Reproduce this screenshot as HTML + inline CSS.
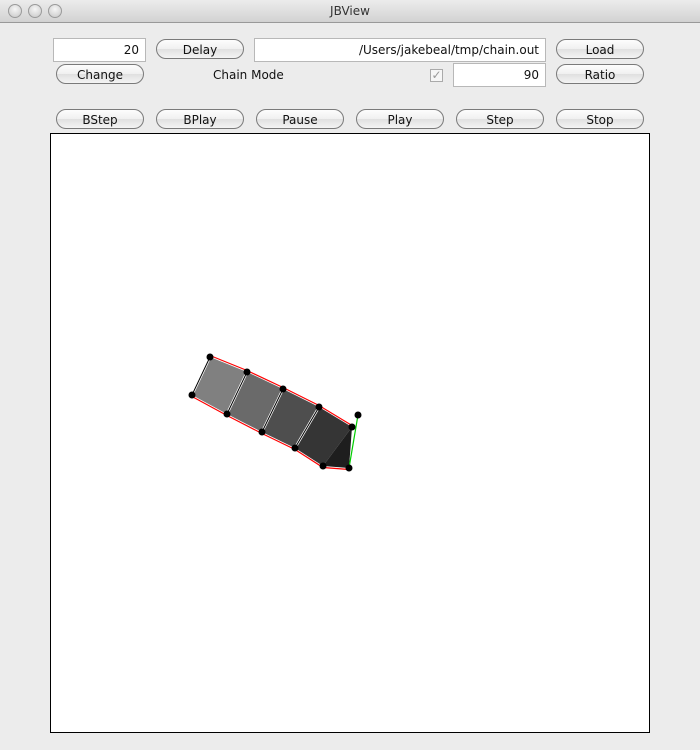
<!DOCTYPE html>
<html><head><style>
body{margin:0;width:700px;height:750px;background:#ececec;font-family:"DejaVu Sans","Liberation Sans",sans-serif;font-size:12px;position:relative;overflow:hidden}
.tb{position:absolute;left:0;top:0;width:700px;height:22px;background:linear-gradient(#ececec,#d2d2d2);border-bottom:1px solid #999;text-align:center;line-height:22px;color:#333;font-size:12px}
.dot{position:absolute;top:4px;width:12px;height:12px;border-radius:50%;background:radial-gradient(circle at 50% 35%,#f6f6f6,#c6c6c6);border:1px solid #9a9a9a}
.b{position:absolute;width:86px;height:18px;border:1px solid #7a7a7a;border-radius:10px;background:linear-gradient(#fdfdfd,#f0f0f0 50%,#e0e0e0 51%,#f4f4f4);text-align:center;line-height:20px;color:#111;box-sizing:content-box}
.f{position:absolute;background:#fff;border:1px solid #b8b8b8;height:22px;line-height:22px;text-align:right;padding-right:6px;box-sizing:border-box;color:#111}
</style></head><body>
<div class="tb">JBView</div>
<div class="dot" style="left:8px"></div><div class="dot" style="left:28px"></div><div class="dot" style="left:48px"></div>
<div class="f" style="left:53px;top:38px;width:93px;height:24px">20</div>
<div class="b" style="left:156px;top:39px">Delay</div>
<div class="f" style="left:254px;top:38px;width:292px;height:24px">/Users/jakebeal/tmp/chain.out</div>
<div class="b" style="left:556px;top:39px">Load</div>
<div class="b" style="left:56px;top:64px">Change</div>
<div style="position:absolute;left:213px;top:68px;color:#111">Chain Mode</div>
<div style="position:absolute;left:430px;top:69px;width:11px;height:11px;border:1px solid #aaa;background:#f6f6f6;color:#999;font-size:12px;line-height:11px;text-align:center">✓</div>
<div class="f" style="left:453px;top:63px;width:93px;height:24px">90</div>
<div class="b" style="left:556px;top:64px">Ratio</div>
<div class="b" style="left:56px;top:109px">BStep</div>
<div class="b" style="left:156px;top:109px">BPlay</div>
<div class="b" style="left:256px;top:109px">Pause</div>
<div class="b" style="left:356px;top:109px">Play</div>
<div class="b" style="left:456px;top:109px">Step</div>
<div class="b" style="left:556px;top:109px">Stop</div>
<svg style="position:absolute;left:0;top:0" width="700" height="750">
<rect x="50.5" y="133.5" width="599" height="599" fill="#fff" stroke="#000"/>
<polygon points="210,357 247,372 227,414 192,395" fill="#808080"/>
<polygon points="247,372 283,389 262,432 227,414" fill="#6a6a6a"/>
<polygon points="283,389 319,407 295,448 262,432" fill="#4e4e4e"/>
<polygon points="319,407 352,427 323,466 295,448" fill="#353535"/>
<polygon points="352,427 349,468 323,466" fill="#1e1e1e"/>
<g stroke="#fff" stroke-width="2.5"><line x1="210" y1="357" x2="192" y2="395"/><line x1="247" y1="372" x2="227" y2="414"/><line x1="283" y1="389" x2="262" y2="432"/><line x1="319" y1="407" x2="295" y2="448"/></g>
<g stroke="#000" stroke-width="1"><line x1="210" y1="357" x2="192" y2="395"/><line x1="247" y1="372" x2="227" y2="414"/><line x1="283" y1="389" x2="262" y2="432"/><line x1="319" y1="407" x2="295" y2="448"/></g>
<polyline points="210,357 247,372 283,389 319,407 352,427" fill="none" stroke="#f00" stroke-width="1.2" transform="translate(0,-1.5)"/>
<polyline points="192,395 227,414 262,432 295,448 323,466 349,468" fill="none" stroke="#f00" stroke-width="1.2" transform="translate(0,1.5)"/>
<line x1="358" y1="415" x2="349" y2="468" stroke="#0c0" stroke-width="1.2"/>
<g fill="#000"><circle cx="210" cy="357" r="3.5"/><circle cx="247" cy="372" r="3.5"/><circle cx="283" cy="389" r="3.5"/><circle cx="319" cy="407" r="3.5"/><circle cx="352" cy="427" r="3.5"/><circle cx="358" cy="415" r="3.5"/><circle cx="192" cy="395" r="3.5"/><circle cx="227" cy="414" r="3.5"/><circle cx="262" cy="432" r="3.5"/><circle cx="295" cy="448" r="3.5"/><circle cx="323" cy="466" r="3.5"/><circle cx="349" cy="468" r="3.5"/></g>
</svg>
</body></html>
